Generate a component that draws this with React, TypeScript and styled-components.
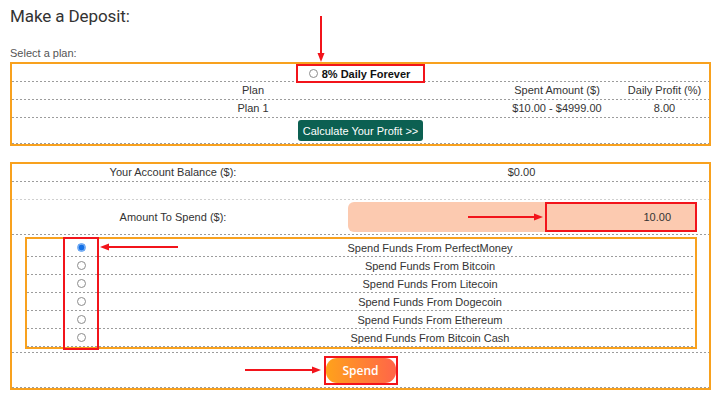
import React from 'react';
import styled, { createGlobalStyle } from 'styled-components';

const GlobalStyle = createGlobalStyle`
  body {
    margin: 0;
    background: #fff;
    font-family: "Liberation Sans", Arial, sans-serif;
    color: #333;
  }
`;

const dashes = (color: string) => `
  background-image: linear-gradient(to right, ${color} 60%, transparent 0);
  background-size: 4px 1px;
  background-repeat: repeat-x;
  background-position: left bottom;
`;

const Page = styled.div`
  position: relative;
  width: 720px;
  height: 400px;
  padding: 4px 9px 0 10px;
  box-sizing: border-box;
  overflow: hidden;
`;

const Title = styled.h2`
  margin: 0;
  font-family: Roboto, "Noto Sans", sans-serif;
  font-weight: 400;
  font-size: 17px;
  letter-spacing: -0.1px;
  line-height: 24px;
  color: #333;
`;

const Caption = styled.div`
  margin-top: 19px;
  font-size: 11px;
  line-height: 13px;
  color: #555;
`;

const Panel = styled.section<{ $gap: number }>`
  margin-top: ${p => p.$gap}px;
  width: 701px;
  box-sizing: border-box;
  border: 2px solid #f8a11e;
`;

const Row = styled.div<{ $h: number; $cols?: string; $faint?: boolean }>`
  display: grid;
  grid-template-columns: ${p => p.$cols ?? '1fr'};
  align-items: center;
  justify-items: center;
  height: ${p => p.$h}px;
  padding-bottom: 1px;
  ${p => dashes(p.$faint ? '#cfcfcf' : '#9c9c9c')}
  font-size: 11px;
  text-align: center;
`;

const Cell = styled.div`
  line-height: 13px;
`;

const FieldCell = styled.div`
  justify-self: stretch;
  padding: 0 12px 0 14px;
`;

const RedFrame = styled.div`
  box-sizing: border-box;
  border: 2px solid #f2141b;
`;

const PlanPick = styled(RedFrame)`
  width: 129px;
  height: 19px;
  display: flex;
  align-items: center;
  justify-content: center;
  gap: 4px;
  padding-right: 2px;
  font-weight: 700;
  color: #111;
`;

const Radio = styled.span<{ $checked?: boolean }>`
  display: inline-block;
  width: 9px;
  height: 9px;
  border-radius: 50%;
  box-sizing: border-box;
  border: 1px solid ${p => (p.$checked ? '#5ea0f2' : '#8c8c8c')};
  background: ${p =>
    p.$checked ? 'radial-gradient(circle, #1470e6 0 2.6px, #8dbbf5 3.2px)' : '#fff'};
`;

const CalcButton = styled.button`
  width: 125px;
  height: 21px;
  border: none;
  border-radius: 3px;
  background: #0c6052;
  color: #fff;
  font-family: "Liberation Sans", Arial, sans-serif;
  font-size: 11px;
  padding: 0;
`;

const AmountField = styled.div`
  position: relative;
  height: 30px;
  border-radius: 6px;
  background: #fccab0;
  display: flex;
  justify-content: flex-end;
`;

const AmountValue = styled(RedFrame)`
  width: 152px;
  height: 100%;
  display: flex;
  align-items: center;
  justify-content: flex-end;
  padding-right: 24px;
  font-size: 11px;
  color: #333;
`;

const PayWrap = styled.div`
  padding: 2px 12px 4px 13px;
  ${dashes('#9c9c9c')}
`;

const PayList = styled.div`
  position: relative;
  border: 2px solid #f8a11e;
`;

const PayRow = styled.div`
  display: grid;
  grid-template-columns: 108px 1fr;
  align-items: center;
  height: 17px;
  padding-bottom: 1px;
  ${dashes('#9c9c9c')}
  font-size: 11px;

  &:last-of-type {
    background: none;
  }
`;

const RadioCell = styled.div`
  display: flex;
  justify-content: center;
`;

const PayLabel = styled.div`
  text-align: center;
  padding-left: 30px;
`;

const RadioMark = styled(RedFrame)`
  position: absolute;
  left: 36px;
  top: -2px;
  width: 36px;
  height: 113px;
`;

const SpendRow = styled(Row)`
  position: relative;
`;

const SpendFrame = styled(RedFrame)`
  width: 74px;
  height: 29px;
`;

const SpendButton = styled.button`
  width: 100%;
  height: 100%;
  border: none;
  border-radius: 11px;
  background: linear-gradient(to right, #ffa21b, #ff6549);
  color: #fff;
  font-family: "Open Sans", "Liberation Sans", sans-serif;
  font-size: 12px;
  font-weight: 600;
  padding: 0;
`;

const Pointer = styled.svg<{ $x: number; $y: number; $flip?: boolean }>`
  position: absolute;
  left: ${p => p.$x}px;
  top: ${p => p.$y}px;
  transform: ${p => (p.$flip ? 'scaleX(-1)' : 'none')};
  pointer-events: none;
`;

const RED = '#f2141b';

const HArrow = ({ x, y, len, flip }: { x: number; y: number; len: number; flip?: boolean }) => (
  <Pointer $x={x} $y={y} $flip={flip} width={len} height={10} viewBox={`0 0 ${len} 10`}>
    <line x1={0} y1={5} x2={len - 7} y2={5} stroke={RED} strokeWidth={2} />
    <polygon points={`${len - 9},1.5 ${len},5 ${len - 9},8.5`} fill={RED} />
  </Pointer>
);

const VArrow = ({ x, y, len }: { x: number; y: number; len: number }) => (
  <Pointer $x={x} $y={y} width={10} height={len} viewBox={`0 0 10 ${len}`}>
    <line x1={5} y1={0} x2={5} y2={len - 7} stroke={RED} strokeWidth={2} />
    <polygon points={`1.5,${len - 9} 5,${len} 8.5,${len - 9}`} fill={RED} />
  </Pointer>
);

const wallets = ['PerfectMoney', 'Bitcoin', 'Litecoin', 'Dogecoin', 'Ethereum', 'Bitcoin Cash'];

const App = () => {
  return (
    <Page>
      <GlobalStyle />
      <Title>Make a Deposit:</Title>
      <Caption>Select a plan:</Caption>

      <Panel $gap={2}>
        <Row $h={17}>
          <PlanPick>
            <Radio />
            <span>8% Daily Forever</span>
          </PlanPick>
        </Row>
        <Row $h={17} $cols="482px 126px 1fr">
          <Cell>Plan</Cell>
          <Cell>Spent Amount ($)</Cell>
          <Cell>Daily Profit (%)</Cell>
        </Row>
        <Row $h={17} $cols="482px 126px 1fr">
          <Cell>Plan 1</Cell>
          <Cell>$10.00 - $4999.00</Cell>
          <Cell>8.00</Cell>
        </Row>
        <Row $h={25}>
          <CalcButton>Calculate Your Profit &gt;&gt;</CalcButton>
        </Row>
      </Panel>

      <Panel $gap={16}>
        <Row $h={17} $cols="322px 1fr">
          <Cell>Your Account Balance ($):</Cell>
          <Cell>$0.00</Cell>
        </Row>
        <Row $h={17} $faint />
        <Row $h={34} $cols="322px 1fr">
          <Cell>Amount To Spend ($):</Cell>
          <FieldCell>
            <AmountField>
              <HArrow x={120} y={10} len={75} />
              <AmountValue>10.00</AmountValue>
            </AmountField>
          </FieldCell>
        </Row>
        <PayWrap>
          <PayList>
            {wallets.map((w, i) => (
              <PayRow key={w}>
                <RadioCell>
                  <Radio $checked={i === 0} />
                </RadioCell>
                <PayLabel>Spend Funds From {w}</PayLabel>
              </PayRow>
            ))}
            <RadioMark />
            <HArrow x={73} y={3} len={78} flip />
          </PayList>
        </PayWrap>
        <SpendRow $h={34}>
          <HArrow x={233} y={12} len={76} />
          <SpendFrame>
            <SpendButton>Spend</SpendButton>
          </SpendFrame>
        </SpendRow>
      </Panel>

      <VArrow x={316} y={16} len={46} />
    </Page>
  );
};

export default App;
